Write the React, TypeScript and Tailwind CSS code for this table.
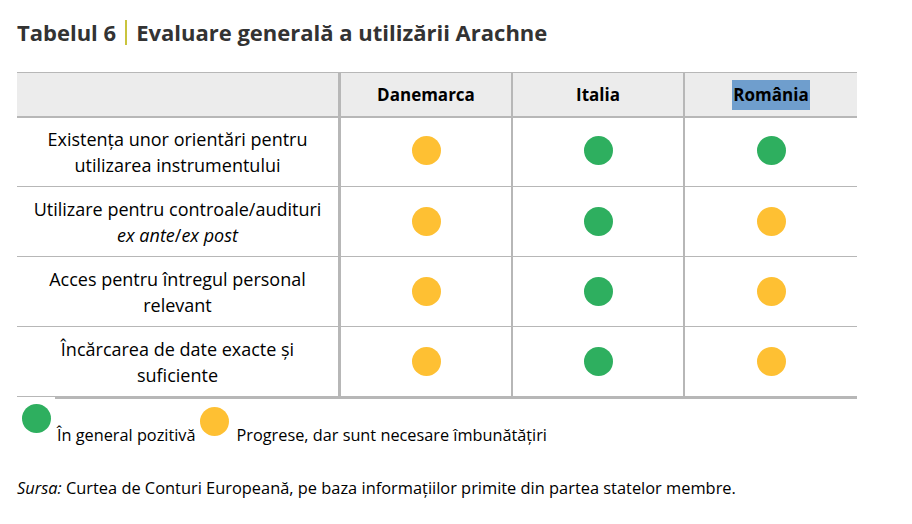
import React from "react";

const G = "bg-[#2eaf5f]";
const Y = "bg-[#fec033]";

function Dot({ c, up }: { c: string; up?: boolean }) {
  return <div className={`w-[29px] h-[29px] rounded-full ${c} ${up ? "mb-[4px]" : ""}`} />;
}

const rows: { label: React.ReactNode; dots: string[]; border: string }[] = [
  {
    label: (
      <>
        Existența unor orientări pentru
        <br />
        utilizarea instrumentului
      </>
    ),
    dots: [Y, G, G],
    border: "border-b border-[#b7b7b7] h-[69px]",
  },
  {
    label: (
      <>
        Utilizare pentru controale/audituri
        <br />
        <i>ex ante</i>/<i>ex post</i>
      </>
    ),
    dots: [Y, G, Y],
    border: "border-b border-[#b7b7b7] h-[70px]",
  },
  {
    label: (
      <>
        Acces pentru întregul personal
        <br />
        relevant
      </>
    ),
    dots: [Y, G, Y],
    border: "border-b border-[#b7b7b7] h-[70px]",
  },
  {
    label: (
      <>
        Încărcarea de date exacte și
        <br />
        suficiente
      </>
    ),
    dots: [Y, G, Y],
    border: "border-b-[3px] border-[#b7b7b7] h-[72px]",
  },
];

export default function App() {
  return (
    <div
      className="w-[912px] h-[524px] bg-white pl-[17px] text-black"
      style={{ fontFamily: "'Open Sans', sans-serif" }}
    >
      <div className="h-[72px] pt-[17px]">
        <h1 className="text-[22px] leading-[30px] font-bold text-[#333333] flex items-center">
          <span>Tabelul 6</span>
          <span className="inline-block w-[2px] h-[25px] bg-[#c9c43d] mx-[9px]" />
          <span>Evaluare generală a utilizării Arachne</span>
        </h1>
      </div>
      <div className="w-[840px]">
        <div className="flex h-[46px] border-t border-b-2 border-[#b7b7b7] bg-[#ececec] text-[17px] font-bold">
          <div className="w-[321px]" />
          <div className="w-[173px] border-l-[3px] border-[#b7b7b7] flex items-center justify-center">
            Danemarca
          </div>
          <div className="w-[172px] border-l-2 border-[#b7b7b7] flex items-center justify-center">
            Italia
          </div>
          <div className="w-[174px] border-l-2 border-[#b7b7b7] flex items-center justify-center">
            <span className="bg-[#6f9ecd] px-[1px] leading-[30px]">România</span>
          </div>
        </div>
        {rows.map((r, i) => (
          <div key={i} className={`flex ${r.border}`}>
            <div className="w-[321px] flex items-center justify-center text-center text-[18px] leading-[26px]">
              <div>{r.label}</div>
            </div>
            <div className="w-[173px] border-l-[3px] border-[#b7b7b7] flex items-center justify-center">
              <Dot c={r.dots[0]} up={i === 0} />
            </div>
            <div className="w-[172px] border-l-2 border-[#b7b7b7] flex items-center justify-center">
              <Dot c={r.dots[1]} up={i === 0} />
            </div>
            <div className="w-[174px] border-l-2 border-[#b7b7b7] flex items-center justify-center">
              <Dot c={r.dots[2]} up={i === 0} />
            </div>
          </div>
        ))}
      </div>
      <div className="relative flex items-start text-[16.3px] leading-[20px] mt-[-2px] h-[47px]">
        <div className="w-[38px] bg-white pt-[7px] pl-[5px]">
          <div className="w-[29px] h-[29px] rounded-full bg-[#2eaf5f]" />
        </div>
        <span className="ml-[2px] mt-[28px] whitespace-nowrap">În general pozitivă</span>
        <div className="w-[29px] h-[29px] rounded-full bg-[#fec033] ml-[4px] mt-[10px]" />
        <span className="ml-[8px] mt-[28px] whitespace-nowrap">Progrese, dar sunt necesare îmbunătățiri</span>
      </div>
      <p className="mt-[34px] text-[16.4px] leading-[20px] whitespace-nowrap">
        <i>Sursa:</i> Curtea de Conturi Europeană, pe baza informațiilor primite din partea statelor membre.
      </p>
    </div>
  );
}
